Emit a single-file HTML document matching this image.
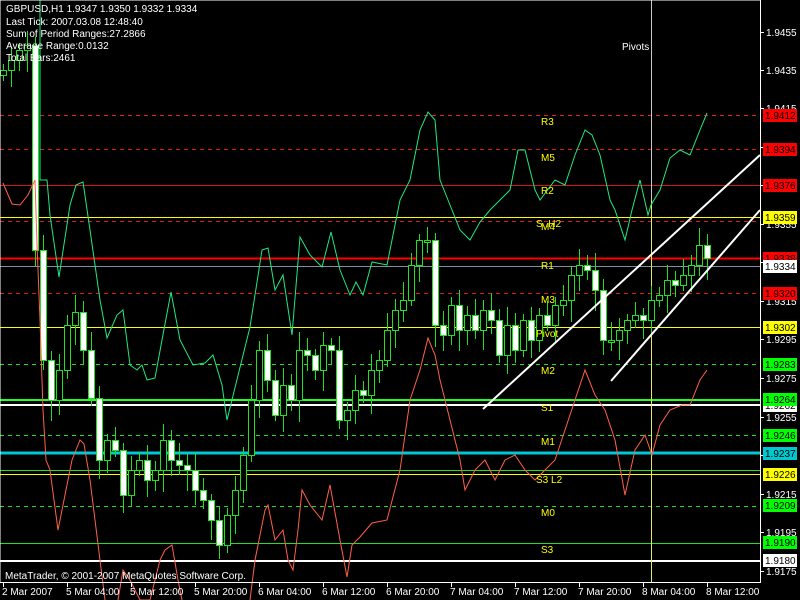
<!DOCTYPE html>
<html><head><meta charset="utf-8"><style>
html,body{margin:0;padding:0;background:#000;width:800px;height:600px;overflow:hidden}
svg{display:block}
text{font-family:"Liberation Sans",sans-serif;font-size:10px}
</style></head><body>
<svg id="s" width="800" height="600" viewBox="0 0 800 600" xmlns="http://www.w3.org/2000/svg">
<rect width="800" height="600" fill="#000"/>
<g id="levels" shape-rendering="crispEdges">
<line x1="0" x2="760" y1="115.5" y2="115.5" stroke="#e02020" stroke-dasharray="4,4"/>
<line x1="0" x2="760" y1="149.5" y2="149.5" stroke="#e02020" stroke-dasharray="4,4"/>
<line x1="0" x2="760" y1="185.5" y2="185.5" stroke="#d01818"/>
<line x1="0" x2="760" y1="217.5" y2="217.5" stroke="#ffff00"/>
<line x1="0" x2="760" y1="221.5" y2="221.5" stroke="#e02020" stroke-dasharray="4,4"/>
<line x1="0" x2="760" y1="258.5" y2="258.5" stroke="#ff0000" stroke-width="2"/>
<line x1="0" x2="760" y1="266.5" y2="266.5" stroke="#8090a0"/>
<line x1="0" x2="760" y1="293.5" y2="293.5" stroke="#e02020" stroke-dasharray="4,4"/>
<line x1="0" x2="760" y1="327.5" y2="327.5" stroke="#ffff00"/>
<line x1="0" x2="760" y1="364.5" y2="364.5" stroke="#20e020" stroke-dasharray="4,4"/>
<line x1="0" x2="760" y1="400" y2="400" stroke="#20ff20" stroke-width="2"/>
<line x1="0" x2="760" y1="405" y2="405" stroke="#fff" stroke-width="2"/>
<line x1="0" x2="760" y1="435.5" y2="435.5" stroke="#20e020" stroke-dasharray="4,4"/>
<line x1="0" x2="760" y1="453" y2="453" stroke="#00c8d8" stroke-width="3"/>
<line x1="0" x2="760" y1="470.5" y2="470.5" stroke="#20e020"/>
<line x1="0" x2="760" y1="474.5" y2="474.5" stroke="#ffff00"/>
<line x1="0" x2="760" y1="506.5" y2="506.5" stroke="#20e020" stroke-dasharray="4,4"/>
<line x1="0" x2="760" y1="543.5" y2="543.5" stroke="#20e020"/>
<line x1="0" x2="760" y1="561" y2="561" stroke="#fff" stroke-width="2"/>
<line x1="651.5" x2="651.5" y1="0" y2="200" stroke="#c8c8c8"/>
<line x1="651.5" x2="651.5" y1="200" y2="582" stroke="#e8e860"/>
</g>
<g id="candles" shape-rendering="crispEdges"></g>
<polyline fill="none" stroke="#20e880" stroke-width="1" points="40,0 40,180 47,180 50,215 59,277 70,205 76,185 83,182 90,230 100,300 107,338 117,315 123,310 130,365 137,370 142,365 147,380 155,378 162,340 171,292 180,340 193,365 205,363 213,355 222,385 227,420 250,327 262,250 268,248 275,290 283,275 292,335 300,237 310,255 322,267 331,232 340,270 350,295 356,282 363,295 372,262 387,265 400,200 410,180 420,130 428,112 435,120 440,180 450,205 460,230 470,240 480,222 490,210 500,200 510,190 518,150 525,150 535,190 540,200 555,180 565,185 575,155 585,130 592,135 600,155 610,200 615,210 625,240 632,210 640,180 648,215 651,205 660,190 670,158 680,150 690,155 700,130 707,113"/>
<polyline fill="none" stroke="#ff6048" stroke-width="1" points="3,183 12,204 20,205 28,195 35,180 37,245 40,320 43,410 46,460 50,470 58,530 62,510 72,460 80,440 84,444 90,480 100,560 105,600"/>
<polyline fill="none" stroke="#ff6048" stroke-width="1" points="118,600 123,570 130,580 140,600 150,600 160,560 165,550 172,545 178,580 182,600"/>
<polyline fill="none" stroke="#ff6048" stroke-width="1" points="250,600 255,560 265,510 268,505 275,540 283,530 288,560 293,570 298,530 302,490 310,505 322,520 330,485 340,540 347,577 352,545 360,537 372,523 387,520 400,470 410,400 420,370 428,338 435,355 440,380 450,420 460,460 465,490 475,470 485,460 495,480 505,460 515,455 525,470 535,480 545,470 555,460 565,430 575,400 585,370 595,395 605,410 615,440 625,495 635,450 645,435 652,455 660,425 670,410 682,405 690,405 700,380 707,370"/>
<line x1="483" y1="409" x2="760" y2="155" stroke="#fff" stroke-width="2"/>
<line x1="611" y1="381" x2="760" y2="210" stroke="#fff" stroke-width="2"/>
<g fill="#ffff00">
<text x="541" y="125">R3</text><text x="541" y="161">M5</text><text x="541" y="194">R2</text>
<text x="536" y="227">S..H2</text><text x="541" y="230">M4</text><text x="541" y="269">R1</text>
<text x="541" y="303">M3</text><text x="536" y="337">Pivot</text><text x="541" y="374">M2</text>
<text x="541" y="411">S1</text><text x="541" y="445">M1</text><text x="536" y="483">S3 L2</text>
<text x="541" y="516">M0</text><text x="541" y="553">S3</text>
</g>
<text x="622" y="50" fill="#fff">Pivots</text>
<g fill="#fff">
<text x="6" y="12">GBPUSD,H1  1.9347 1.9350 1.9332 1.9334</text>
<text x="6" y="25">Last Tick: 2007.03.08 12:48:40</text>
<text x="6" y="37">Sum of Period Ranges:27.2866</text>
<text x="6" y="49">Average Range:0.0132</text>
<text x="6" y="61">Total Bars:2461</text>
<text x="5" y="579">MetaTrader, © 2001-2007 MetaQuotes Software Corp.</text>
</g>
<rect x="0" y="0" width="760.5" height="582.5" fill="none" stroke="#fff"/>
<g id="axis" fill="#fff"></g>
</svg>
<script>
(function(){
var NS="http://www.w3.org/2000/svg";
function el(p,t,a,txt){var e=document.createElementNS(NS,t);for(var k in a)e.setAttribute(k,a[k]);if(txt)e.textContent=txt;p.appendChild(e);return e;}
var C=[70,60,50,45,250,360,400,370,325,312,350,398,460,440,450,495,470,460,480,470,440,460,465,470,490,500,520,545,515,490,455,400,350,380,415,385,400,350,355,370,345,350,420,410,390,395,370,360,330,310,300,265,240,240,325,335,305,330,315,330,310,320,355,325,350,320,340,315,325,305,300,275,265,270,290,340,340,330,320,315,320,300,295,280,285,275,265,245,258];
var g=document.getElementById("candles");
for(var i=0;i<C.length;i++){var x=3+i*8;var o=i?C[i-1]:75,c=C[i];
 var bt=Math.min(o,c),bb=Math.max(o,c);if(bb-bt<2)bb=bt+2;
 var hi=bt-6-((i*7)%13),lo=bb+6+((i*11)%17);
 el(g,"line",{x1:x+0.5,x2:x+0.5,y1:hi,y2:lo,stroke:"#20e020"});
 var bear=c>o;
 el(g,"rect",{x:x-2.5,y:bt+0.5,width:6,height:bb-bt,fill:bear?"#fff":"#000",stroke:"#20e020"});
}
var ax=document.getElementById("axis");
var prices=[["1.9455",32],["1.9435",70],["1.9415",108],["1.9395",147],["1.9375",185],["1.9355",224],["1.9335",262],["1.9315",301],["1.9295",339],["1.9275",378],["1.9255",417],["1.9235",455],["1.9215",494],["1.9195",532],["1.9175",571]];
prices.forEach(function(p){el(ax,"line",{x1:760,x2:764,y1:p[1]+0.5,y2:p[1]+0.5,stroke:"#fff"});el(ax,"text",{x:766,y:p[1]+4},p[0]);});
var boxes=[["1.9412",115,"#ff0000"],["1.9394",149,"#ff0000"],["1.9376",185,"#ff0000"],["1.9359",217,"#ffff00"],["1.9338",258,"#ff0000"],["1.9334",266,"#ffffff"],["1.9320",293,"#ff0000"],["1.9302",327,"#ffff00"],["1.9283",364,"#00ff00"],["1.9262",405,"#ffffff"],["1.9264",399,"#00ff00"],["1.9246",435,"#00ff00"],["1.9237",453,"#00c8d0"],["1.9226",474,"#ffff00"],["1.9209",505,"#00ff00"],["1.9190",542,"#00ff00"],["1.9180",560,"#ffffff"]];
boxes.forEach(function(b){el(ax,"rect",{x:763,y:b[1]-6,width:34,height:13,fill:b[2]});el(ax,"text",{x:765,y:b[1]+4,fill:"#000"},b[0]);});
var times=[["2 Mar 2007",3],["5 Mar 04:00",67],["5 Mar 12:00",131],["5 Mar 20:00",195],["6 Mar 04:00",259],["6 Mar 12:00",323],["6 Mar 20:00",387],["7 Mar 04:00",451],["7 Mar 12:00",515],["7 Mar 20:00",579],["8 Mar 04:00",643],["8 Mar 12:00",707]];
times.forEach(function(t){el(ax,"line",{x1:t[1]+0.5,x2:t[1]+0.5,y1:583,y2:587,stroke:"#fff"});el(ax,"text",{x:t[1]-1,y:595},t[0]);});
})();
</script>
</body></html>
